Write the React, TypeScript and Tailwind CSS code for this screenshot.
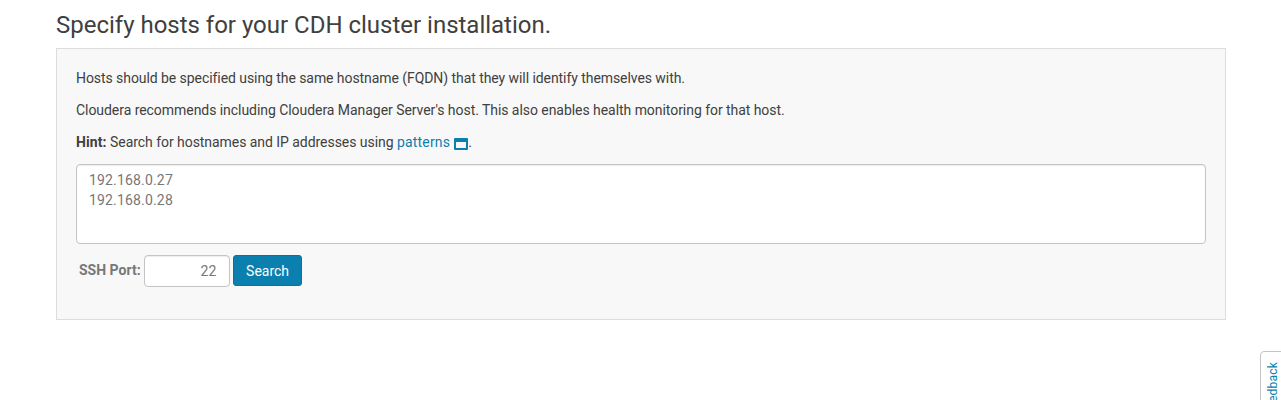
import React from "react";

export default function App() {
  return (
    <div className="relative h-[400px] overflow-hidden bg-white pl-14 pr-[55px] pt-[9px] font-[Roboto,sans-serif] text-[14px] leading-5 text-[#404040]">
      <h1 className="mb-[7px] text-[24px] leading-8 tracking-[-0.01px]">Specify hosts for your CDH cluster installation.</h1>
      <main className="h-[272px] border border-[#ddd] bg-[#f8f8f8] px-[19px] pt-[19px]">
        <p className="mb-3 tracking-[-0.066px]">Hosts should be specified using the same hostname (FQDN) that they will identify themselves with.</p>
        <p className="mb-3 tracking-[-0.05px]">Cloudera recommends including Cloudera Manager Server's host. This also enables health monitoring for that host.</p>
        <p className="mb-3 flex">
          <span><b className="tracking-[0.1px]">Hint:</b><span className="tracking-[-0.05px]"> Search for hostnames and IP addresses using </span><a className="tracking-[0.19px] text-[#0b7fad]">patterns</a></span>
          <svg className="ml-1 mt-[6px] h-[12px] w-[14px]" viewBox="0 0 14 12">
            <path d="M1 0h12q1 0 1 1v10q0 1-1 1H1q-1 0-1-1V1q0-1 1-1zM2 4v6h10V4z" fill="#0b7fad" fillRule="evenodd" />
          </svg>
          <span>.</span>
        </p>
        <textarea readOnly className="block h-20 w-full resize-none rounded border border-[#c4c4c4] bg-white px-3 py-[5px] tracking-[0.17px] text-[#777] shadow-[inset_0_1px_1px_rgba(0,0,0,0.075)] outline-none" value={"192.168.0.27\n192.168.0.28"} />
        <div className="mt-[11px] flex items-start pl-[3px]">
          <label className="mt-[5px] mr-[3px] font-bold text-[#777]">SSH Port:</label>
          <input readOnly value="22" className="h-8 w-[86px] rounded border border-[#c4c4c4] bg-white px-3 text-right tracking-[0.17px] text-[#777] shadow-[inset_0_1px_1px_rgba(0,0,0,0.075)] outline-none" />
          <button className="ml-[3px] h-[31px] w-[69px] rounded-[3px] border border-[#0a739d] bg-[#0b7fad] pl-px pt-px text-white">Search</button>
        </div>
      </main>
      <aside className="absolute left-[1260px] top-[351px] flex h-[80px] w-[26px] justify-center rounded-l border border-[#c4c4c4] bg-white pt-[10px] text-[12px] tracking-[0.2px] text-[#0b7fad]">
        <span className="h-fit rotate-180 [writing-mode:vertical-rl]">Feedback</span>
      </aside>
    </div>
  );
}
